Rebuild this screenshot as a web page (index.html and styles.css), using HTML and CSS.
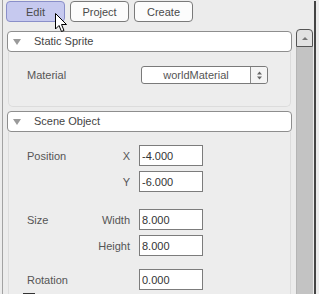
FILE: index.html
```html
<!DOCTYPE html>
<html lang="en">
<head>
    <meta charset="UTF-8">
    <title>Inspector</title>
    <link rel="stylesheet" href="styles.css">
</head>
<body>
    <div class="frame">
        <div class="toolbar">
            <button class="tab-btn active">Edit</button>
            <button class="tab-btn">Project</button>
            <button class="tab-btn">Create</button>
        </div>

        <div class="content">
            <div class="panels">
                <div class="panel">
                    <div class="panel-head"><span class="arrow"></span>Static Sprite</div>
                    <div class="panel-body sprite-body">
                        <div class="row">
                            <span class="name">Material</span>
                            <div class="select">
                                <span class="select-text">worldMaterial</span>
                                <span class="spin">
                                    <svg width="7" height="9" viewBox="0 0 7 9"><path d="M3.5 0.5 L6 3.5 H1 Z M1 5.5 H6 L3.5 8.5 Z" fill="#666"/></svg>
                                </span>
                            </div>
                        </div>
                    </div>
                </div>

                <div class="panel">
                    <div class="panel-head"><span class="arrow"></span>Scene Object</div>
                    <div class="panel-body object-body">
                        <div class="group">
                            <span class="name">Position</span><span class="axis">X</span><input class="field" value="-4.000">
                            <span class="name"></span><span class="axis">Y</span><input class="field" value="-6.000">
                        </div>
                        <div class="group">
                            <span class="name">Size</span><span class="axis">Width</span><input class="field" value="8.000">
                            <span class="name"></span><span class="axis">Height</span><input class="field" value="8.000">
                        </div>
                        <div class="group">
                            <span class="name">Rotation</span><span class="axis"></span><input class="field" value="0.000">
                        </div>
                        <div class="check-row"><span class="check"></span></div>
                    </div>
                </div>
            </div>

            <div class="scrollbar">
                <div class="scroll-up"><span class="up-tri"></span></div>
                <div class="scroll-track"></div>
            </div>
            <div class="edge"></div>
        </div>

        <svg class="cursor" width="13" height="20" viewBox="0 0 13 20">
            <path d="M0.5 0.5 V16 L4 12.5 L6.5 18.5 L9 17.5 L6.5 11.5 H11.5 Z" fill="#fff" stroke="#000" stroke-width="1"/>
        </svg>
    </div>
</body>
</html>
```

FILE: styles.css
```css
body {
    margin: 0;
    background: #ececec;
    font-family: "Liberation Sans", Arial, sans-serif;
    font-size: 11px;
    color: #555;
}
.frame {
    position: relative;
    width: 317px;
    height: 294px;
    overflow: hidden;
    box-sizing: border-box;
    border-left: 1px solid #a2a2a2;
    margin-left: 2px;
}
.toolbar {
    display: flex;
    gap: 5px;
    padding: 1px 0 0 3px;
    height: 22px;
}
.tab-btn {
    width: 59px;
    height: 21px;
    padding: 0;
    border: 1px solid #7a7a7a;
    border-radius: 4px;
    background: #fcfcfc;
    font-family: inherit;
    font-size: 11px;
    color: #4a4a4a;
}
.tab-btn.active {
    background: #c6c9ef;
    border-color: #8a8fc9;
}
.content {
    display: flex;
    padding-top: 5px;
}
.panels {
    width: 285px;
    padding: 3px 0 0 4px;
    display: flex;
    flex-direction: column;
    gap: 4px;
}
.panel-head {
    height: 19px;
    line-height: 19px;
    border: 1px solid #8e8e8e;
    border-radius: 4px;
    background: #fff;
    color: #444;
    display: flex;
    align-items: center;
}
.arrow {
    width: 0;
    height: 0;
    border-left: 4px solid transparent;
    border-right: 4px solid transparent;
    border-top: 6px solid #9a9a9a;
    margin: 1px 13px 0 5px;
}
.panel-body {
    border: 1px solid #dcdcdc;
    border-top: none;
    border-radius: 0 0 5px 5px;
    margin: 0 1px;
    background: #ededed;
}
.sprite-body {
    height: 54px;
}
.row {
    display: flex;
    align-items: center;
    padding: 14px 0 0 18px;
}
.row .name {
    width: 114px;
}
.select {
    width: 125px;
    height: 16px;
    border: 1px solid #7a7a7a;
    border-radius: 3px;
    background: #fff;
    display: flex;
}
.select-text {
    flex: 1;
    text-align: center;
    line-height: 16px;
    color: #555;
}
.spin {
    width: 16px;
    border-left: 1px solid #8a8a8a;
    display: flex;
    align-items: center;
    justify-content: center;
    background: #f4f4f4;
    border-radius: 0 3px 3px 0;
}
.object-body {
    height: 200px;
    padding: 13px 0 0 18px;
    box-sizing: border-box;
}
.group {
    display: grid;
    grid-template-columns: 58px 36px 64px;
    column-gap: 9px;
    row-gap: 5px;
    align-items: center;
    margin-bottom: 17px;
}
.group:nth-child(2) {
    margin-bottom: 13px;
}
.group:nth-child(3) {
    margin-bottom: 3px;
}
.axis {
    text-align: right;
}
.field {
    width: 64px;
    height: 21px;
    box-sizing: border-box;
    border: 1px solid #7c7c7c;
    background: #fff;
    font-family: inherit;
    font-size: 11px;
    color: #333;
    padding: 0 2px;
    margin: 0;
}
.check {
    display: block;
    width: 10px;
    height: 10px;
    margin-left: -4px;
    border: 1px solid #333;
    border-top-width: 2px;
    background: #fff;
}
.scrollbar {
    width: 17px;
    margin-left: 4px;
    padding-top: 1px;
    display: flex;
    flex-direction: column;
}
.scroll-up {
    height: 16px;
    border: 1px solid #555;
    border-radius: 4px 4px 0 0;
    background: #e2e2e2;
    display: flex;
    align-items: center;
    justify-content: center;
}
.up-tri {
    width: 0;
    height: 0;
    border-left: 3px solid transparent;
    border-right: 3px solid transparent;
    border-bottom: 3px solid #777;
}
.scroll-track {
    flex: 1;
    height: 260px;
    background: #c3c3c3;
    border-left: 1px solid #b5b5b5;
}
.edge {
    width: 2px;
    height: 294px;
    margin: -27px 0 0 1px;
    background: #454545;
}
.cursor {
    position: absolute;
    left: 52px;
    top: 13px;
}
```
